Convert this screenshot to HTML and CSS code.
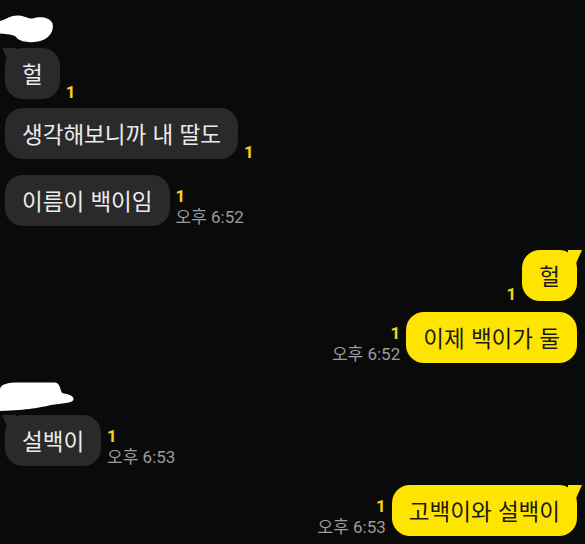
FILE: index.html
```html
<!DOCTYPE html>
<html lang="ko">
<head>
<meta charset="utf-8">
<title>chat</title>
<link rel="stylesheet" href="styles.css">
</head>
<body>
<div class="chat">
  <div class="name name-a">
    <svg width="60" height="32" viewBox="0 0 60 32"><path d="M0 7 C7 5 11 1 19 1.5 C25 2 29 5 33 4.5 C39 2 50 3 52.5 9.5 C54.5 17 49 25.5 38 27.5 C29 29 20 28.5 15 22 C10 20 4 20 0 19.5 Z" fill="#fff"/></svg>
  </div>
  <div class="row in r1">
    <div class="bubble dark tail-l">헐</div>
    <div class="meta"><span class="unread">1</span></div>
  </div>
  <div class="row in r2">
    <div class="bubble dark">생각해보니까 내 딸도</div>
    <div class="meta"><span class="unread">1</span></div>
  </div>
  <div class="row in r3">
    <div class="bubble dark">이름이 백이임</div>
    <div class="meta"><span class="unread">1</span><span class="time">오후 6:52</span></div>
  </div>
  <div class="row out r4">
    <div class="meta"><span class="unread">1</span></div>
    <div class="bubble yellow tail-r">헐</div>
  </div>
  <div class="row out r5">
    <div class="meta"><span class="unread">1</span><span class="time">오후 6:52</span></div>
    <div class="bubble yellow">이제 백이가 둘</div>
  </div>
  <div class="name name-b">
    <svg width="80" height="32" viewBox="0 0 80 32"><path d="M0 8 C1 3 7 1.5 20 1.5 L55 1.5 C60 2 60 8 62 12 C68 13 74 14.5 73.5 18.5 C73 22 61 22.5 51 24 C40 26.5 29 29 0 30 Z" fill="#fff"/></svg>
  </div>
  <div class="row in r6">
    <div class="bubble dark tail-l">설백이</div>
    <div class="meta"><span class="unread">1</span><span class="time">오후 6:53</span></div>
  </div>
  <div class="row out r7">
    <div class="meta"><span class="unread">1</span><span class="time">오후 6:53</span></div>
    <div class="bubble yellow tail-r">고백이와 설백이</div>
  </div>
</div>
</body>
</html>
```
FILE: styles.css
```css
html, body {
  margin: 0;
  padding: 0;
  background: #0b0a0b;
}

body {
  width: 585px;
  height: 544px;
  overflow: hidden;
  font-family: Roboto, "Noto Sans CJK KR", sans-serif;
}

.chat {
  display: flex;
  flex-direction: column;
  padding: 0 8px 0 5px;
}

.name {
  height: 30px;
  margin-left: -5px;
}

.name svg {
  display: block;
}

.name-a { margin-top: 14px; }
.name-b { margin-top: 18px; }

.row {
  display: flex;
  align-items: flex-end;
}

.row.in {
  justify-content: flex-start;
  gap: 6px;
}

.row.out {
  justify-content: flex-end;
  gap: 6px;
}

.r1 { margin-top: 4px; }
.r2 { margin-top: 9px; }
.r3 { margin-top: 16px; }
.r4 { margin-top: 24px; }
.r5 { margin-top: 11px; }
.r6 { margin-top: 4px; }
.r7 { margin-top: 19px; }

.bubble {
  position: relative;
  height: 51px;
  box-sizing: border-box;
  display: flex;
  align-items: center;
  padding: 0 17px 2px;
  border-radius: 18px;
  font-family: "Noto Sans CJK KR", sans-serif;
  font-size: 22.5px;
  font-weight: 400;
  white-space: nowrap;
}

.bubble.dark {
  background: #2a2a2a;
  color: #ececec;
}

.bubble.yellow {
  background: #fee500;
  color: #1b1a14;
}

.tail-l::before {
  content: "";
  position: absolute;
  left: -3px;
  top: 0;
  width: 14px;
  height: 14px;
  background: #2a2a2a;
  clip-path: polygon(0 0, 100% 0, 100% 100%, 45% 100%);
}

.tail-r::before {
  content: "";
  position: absolute;
  right: -5px;
  top: 0;
  width: 14px;
  height: 14px;
  background: #fee500;
  clip-path: polygon(0 0, 100% 0, 55% 100%, 0 100%);
}

.meta {
  display: flex;
  flex-direction: column;
  margin-bottom: -2px;
}

.row.in .meta { align-items: flex-start; }
.row.out .meta { align-items: flex-end; }

.unread {
  color: #f3d614;
  font-family: Roboto, sans-serif;
  font-weight: 700;
  font-size: 17px;
  line-height: 18px;
}

.time {
  color: #9c9c9c;
  font-size: 17px;
  line-height: 21px;
  margin-top: 2px;
  white-space: nowrap;
}
```
